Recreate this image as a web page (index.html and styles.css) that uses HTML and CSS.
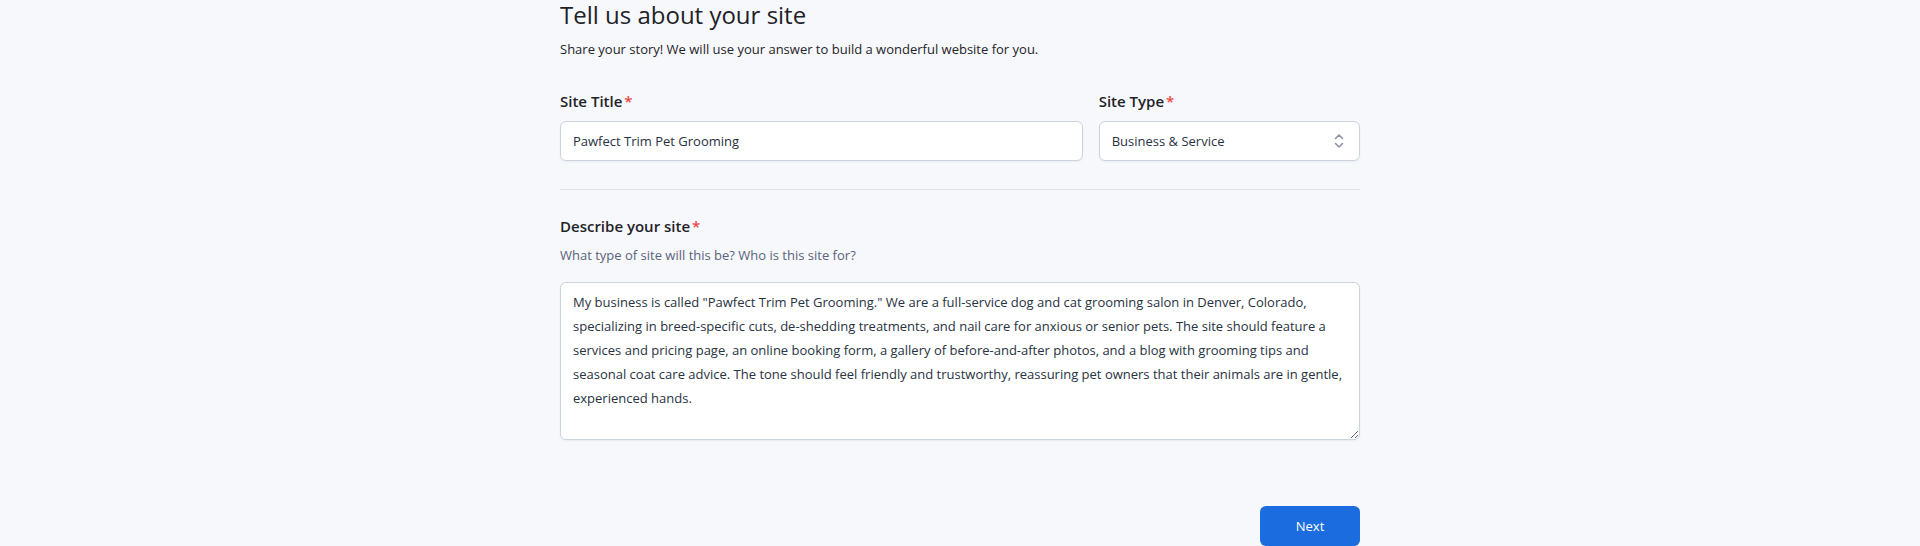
FILE: index.html
```html
<!DOCTYPE html>
<html lang="en">
<head>
    <meta charset="UTF-8">
    <meta name="viewport" content="width=device-width, initial-scale=1.0">
    <title>Tell us about your site</title>
    <link rel="stylesheet" href="styles.css">
</head>
<body>
    <div class="wizard">
        <!-- En-tête -->
        <h1 class="wizard-title">Tell us about your site</h1>
        <p class="wizard-intro">Share your story! We will use your answer to build a wonderful website for you.</p>

        <!-- Titre et type -->
        <div class="field-row">
            <div class="field">
                <label class="field-label" for="site-title">Site Title<span class="required">*</span></label>
                <input type="text" id="site-title" class="field-input" value="Pawfect Trim Pet Grooming">
            </div>
            <div class="field">
                <label class="field-label" for="site-type">Site Type<span class="required">*</span></label>
                <div class="select-wrap">
                    <select id="site-type" class="field-input field-select">
                        <option>Business &amp; Service</option>
                        <option>Blog</option>
                        <option>Portfolio</option>
                        <option>Online Store</option>
                    </select>
                    <svg class="select-icon" width="12" height="16" viewBox="0 0 12 16" fill="none" stroke="currentColor" stroke-width="1.6" stroke-linecap="round" stroke-linejoin="round">
                        <path d="M2.5 5.5L6 2l3.5 3.5"/>
                        <path d="M2.5 10.5L6 14l3.5-3.5"/>
                    </svg>
                </div>
            </div>
        </div>

        <!-- Description -->
        <div class="field describe">
            <label class="field-label" for="site-desc">Describe your site<span class="required">*</span></label>
            <p class="field-help">What type of site will this be? Who is this site for?</p>
            <textarea id="site-desc" class="field-input field-textarea">My business is called "Pawfect Trim Pet Grooming." We are a full-service dog and cat grooming salon in Denver, Colorado, specializing in breed-specific cuts, de-shedding treatments, and nail care for anxious or senior pets. The site should feature a services and pricing page, an online booking form, a gallery of before-and-after photos, and a blog with grooming tips and seasonal coat care advice. The tone should feel friendly and trustworthy, reassuring pet owners that their animals are in gentle, experienced hands.</textarea>
        </div>

        <div class="wizard-actions">
            <button class="btn btn-primary">Next</button>
        </div>
    </div>
</body>
</html>
```

FILE: styles.css
```css
body {
    font-family: 'Open Sans', 'Noto Sans', Arial, sans-serif;
    background: #f7f8fc;
    color: #1f2937;
    margin: 0;
    padding: 0;
}

.wizard {
    max-width: 800px;
    margin: 0 auto;
}

.wizard-title {
    font-size: 24px;
    line-height: 30px;
    font-weight: 400;
    color: #1e2227;
    margin: 0;
}

.wizard-intro {
    font-size: 13px;
    line-height: 20px;
    color: #1f2328;
    margin: 9px 0 0 0;
}

.field-row {
    display: grid;
    grid-template-columns: 2fr 1fr;
    gap: 16px;
    margin-top: 31px;
    padding-bottom: 28px;
    border-bottom: 1px solid #e1e5eb;
}

.field {
    display: flex;
    flex-direction: column;
}

.field-label {
    font-size: 15px;
    line-height: 22px;
    font-weight: 600;
    color: #1f2328;
    margin-bottom: 9px;
}

.required {
    color: #ef4444;
    margin-left: 2px;
}

.field-input {
    box-sizing: border-box;
    width: 100%;
    height: 40px;
    padding: 0 12px;
    font-family: inherit;
    font-size: 13px;
    color: #283242;
    background: #fff;
    border: 1px solid #cbd3df;
    border-radius: 6px;
    box-shadow: 0 1px 2px rgba(16, 24, 40, 0.05);
    outline: none;
}

.select-wrap {
    position: relative;
}

.field-select {
    appearance: none;
    -webkit-appearance: none;
    padding-right: 36px;
}

.select-icon {
    position: absolute;
    right: 15px;
    top: 12px;
    color: #8a94a8;
    pointer-events: none;
}

.describe {
    padding-top: 25px;
}

.describe .field-label {
    margin-bottom: 8px;
}

.field-help {
    font-size: 13px;
    line-height: 20px;
    color: #59647a;
    margin: 0 0 17px 0;
}

.field-textarea {
    height: 158px;
    padding: 7px 12px;
    line-height: 24px;
    resize: vertical;
}

.wizard-actions {
    display: flex;
    justify-content: flex-end;
    margin-top: 66px;
}

.btn {
    width: 100px;
    height: 40px;
    font-family: inherit;
    font-size: 13px;
    border: none;
    border-radius: 6px;
    cursor: pointer;
}

.btn-primary {
    background: #1b6cde;
    color: #fff;
}
```
